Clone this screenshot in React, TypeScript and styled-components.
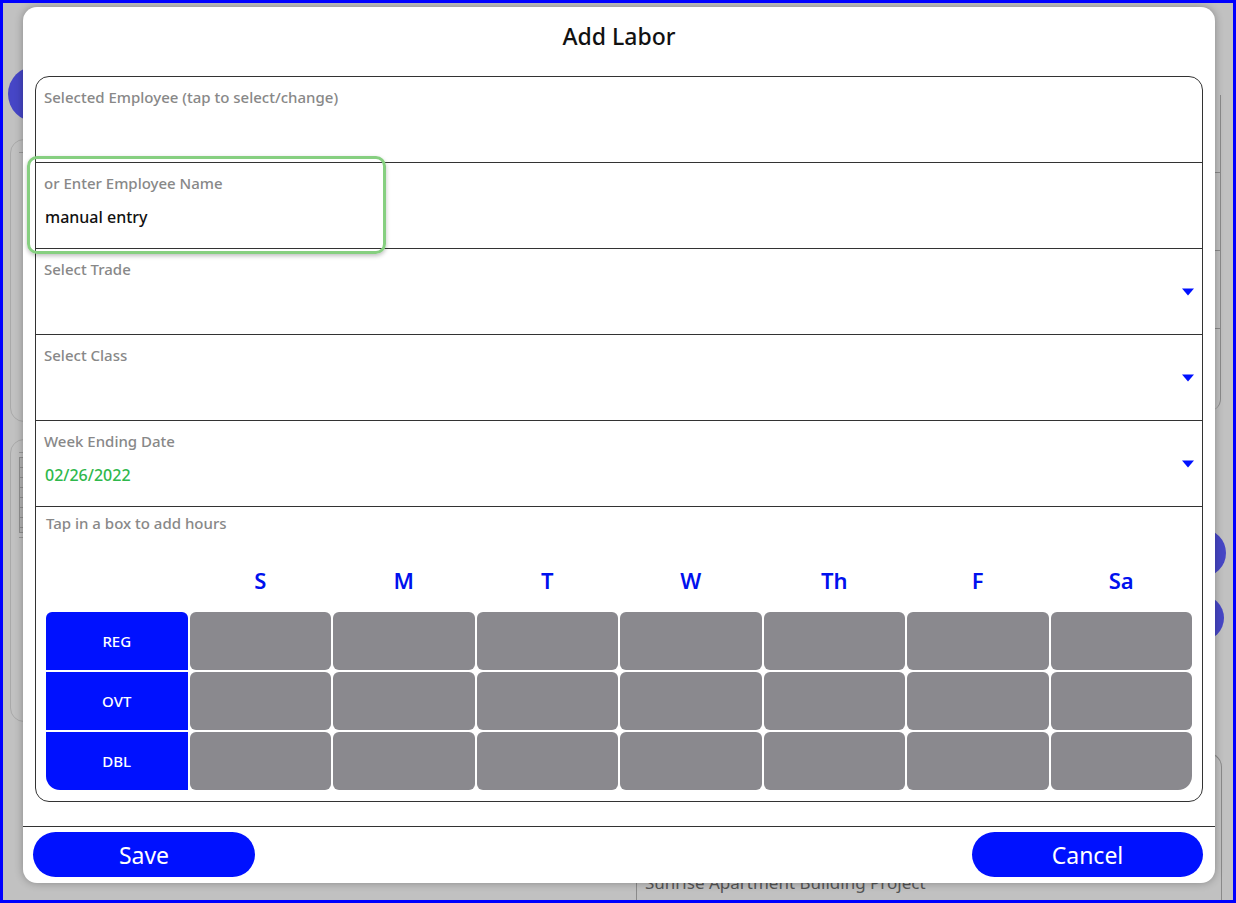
import React from 'react';
import styled, { createGlobalStyle } from 'styled-components';

const GlobalStyle = createGlobalStyle`
    html, body {
        margin: 0;
        padding: 0;
        background: #c1c1c1;
    }
    * {
        box-sizing: border-box;
    }
`;

const DAYS = ['S', 'M', 'T', 'W', 'Th', 'F', 'Sa'];
const PAY_TYPES = ['REG', 'OVT', 'DBL'];

const Frame = styled.div`
    position: relative;
    width: 1236px;
    height: 903px;
    border: 3px solid #0000ff;
    background: #c1c1c1;
    overflow: hidden;
    font-family: 'Noto Sans', 'Open Sans', sans-serif;
`;

/* dimmed page behind the dialog */
const BackdropPage = styled.div`
    display: flex;
    height: 100%;
`;

const LeftRail = styled.div`
    width: 40px;
    flex-shrink: 0;
    padding: 63px 0 0 5px;
    display: flex;
    flex-direction: column;
    gap: 17px;
`;

const BlueDot = styled.div<{ size: number }>`
    width: ${props => props.size}px;
    height: ${props => props.size}px;
    border-radius: 50%;
    background: #4646c6;
    flex-shrink: 0;
`;

const GhostCard = styled.div<{ height: number }>`
    height: ${props => props.height}px;
    margin-left: 2px;
    border: 1px solid #a9a9a9;
    border-radius: 14px;
    padding: 12px 0 0 8px;
    display: flex;
    flex-direction: column;
    gap: 4px;
`;

const GhostLine = styled.div<{ width: number }>`
    width: ${props => props.width}px;
    height: 1px;
    background: #9a9a9a;
`;

const GhostTable = styled.div`
    width: 30px;
    height: 76px;
    border: 1px solid #8f8f8f;
    background: repeating-linear-gradient(#b3b3b3 0 9px, #8f8f8f 9px 10px);
`;

const CenterArea = styled.div`
    flex: 1;
    display: flex;
    flex-direction: column;
    justify-content: flex-end;
    align-items: flex-end;
`;

const BottomCard = styled.div`
    width: 586px;
    height: 147px;
    margin-right: -4px;
    border: 1px solid #8a8a8a;
    border-bottom: none;
    border-radius: 0 14px 0 0;
    padding: 117px 0 0 8px;
    font-size: 17px;
    color: #555;
`;

const RightRail = styled.div`
    width: 15px;
    flex-shrink: 0;
    padding-top: 92px;
    display: flex;
    flex-direction: column;
`;

const GhostPanel = styled.div`
    width: 22px;
    margin-left: -19px;
    height: 316px;
    border-right: 1px solid #8a8a8a;
    border-radius: 0 0 12px 0;
    display: flex;
    flex-direction: column;
`;

const GhostPanelRow = styled.div`
    height: 78px;
    border-bottom: 1px solid #8a8a8a;
`;

const RightDots = styled.div`
    margin: 118px 0 0 -40px;
    display: flex;
    flex-direction: column;
    gap: 18px;
`;

/* dialog */
const Modal = styled.div`
    position: absolute;
    left: 20px;
    top: 4px;
    width: 1192px;
    height: 876px;
    background: #ffffff;
    border-radius: 14px;
    box-shadow: 0 0 8px rgba(0, 0, 0, 0.3);
    display: flex;
    flex-direction: column;
`;

const Title = styled.div`
    height: 58px;
    line-height: 58px;
    text-align: center;
    font-size: 23px;
    font-weight: 500;
    color: #111;
`;

const FormBox = styled.div`
    margin: 11px 12px 0 12px;
    height: 726px;
    border: 1px solid #333;
    border-radius: 14px;
    display: flex;
    flex-direction: column;
`;

const FieldRow = styled.div`
    position: relative;
    height: 86px;
    flex-shrink: 0;
    padding: 10px 8px 0 8px;
    border-bottom: 1px solid #333;
    display: flex;
    flex-direction: column;
`;

const FieldLabel = styled.div`
    font-size: 15px;
    line-height: 20px;
    font-weight: 500;
    color: #888;
`;

const FieldValue = styled.div<{ color: string }>`
    margin-top: 13px;
    margin-left: 1px;
    font-size: 16px;
    line-height: 22px;
    font-weight: 500;
    color: ${props => props.color};
`;

const DropArrow = styled.span`
    position: absolute;
    right: 8px;
    top: 50%;
    transform: translateY(-50%);
    width: 0;
    height: 0;
    border-left: 6px solid transparent;
    border-right: 6px solid transparent;
    border-top: 7px solid #0011ff;
`;

const FocusRing = styled.div`
    position: absolute;
    left: -9px;
    top: -7px;
    width: 359px;
    height: 98px;
    border: 3px solid #86cf80;
    border-radius: 10px;
    box-shadow: 0 2px 4px rgba(0, 0, 0, 0.25);
    pointer-events: none;
`;

const HoursSection = styled.div`
    flex: 1;
    padding: 6px 10px 10px 10px;
    display: flex;
    flex-direction: column;
`;

const HoursHint = styled.div`
    font-size: 15px;
    line-height: 20px;
    font-weight: 500;
    color: #888;
`;

const DayHeaderRow = styled.div`
    margin-top: 31px;
    height: 32px;
    display: grid;
    grid-template-columns: repeat(8, 1fr);
    column-gap: 2px;
`;

const DayHeader = styled.div`
    text-align: center;
    line-height: 32px;
    font-size: 22px;
    font-weight: 600;
    color: #0011ee;
`;

const HoursGrid = styled.div`
    margin-top: 16px;
    display: grid;
    grid-template-columns: repeat(8, 1fr);
    grid-template-rows: repeat(3, 58px);
    gap: 2px;
`;

const PayTypeCell = styled.div<{ radius: string }>`
    background: #0011ff;
    border-radius: ${props => props.radius};
    color: #fff;
    font-size: 15px;
    font-weight: 500;
    display: flex;
    align-items: center;
    justify-content: center;
`;

const HourCell = styled.button<{ radius: string }>`
    border: none;
    padding: 0;
    background: #8a898e;
    border-radius: ${props => props.radius};
    cursor: pointer;
`;

const Footer = styled.div`
    margin-top: 24px;
    border-top: 1px solid #333;
    padding: 5px 12px 0 10px;
    display: flex;
    justify-content: space-between;
`;

const PillButton = styled.button<{ width: number }>`
    width: ${props => props.width}px;
    height: 45px;
    border: none;
    border-radius: 23px;
    background: #0011ff;
    color: #fff;
    font-family: 'Noto Sans', 'Open Sans', sans-serif;
    font-size: 23px;
    font-weight: 400;
    cursor: pointer;
`;

const payRadius = (i: number) => {
    if (i === 0) return '6px 6px 0 0';
    if (i === PAY_TYPES.length - 1) return '0 0 0 14px';
    return '0';
};

const App: React.FC = () => {
    return (
        <>
            <GlobalStyle />
            <Frame>
                <BackdropPage>
                    <LeftRail>
                        <BlueDot size={56} />
                        <GhostCard height={283}>
                            <GhostLine width={10} />
                        </GhostCard>
                        <GhostCard height={283}>
                            <GhostLine width={12} />
                            <GhostTable />
                            <GhostLine width={20} />
                        </GhostCard>
                    </LeftRail>
                    <CenterArea>
                        <BottomCard>Sunrise Apartment Building Project</BottomCard>
                    </CenterArea>
                    <RightRail>
                        <GhostPanel>
                            <GhostPanelRow />
                            <GhostPanelRow />
                            <GhostPanelRow />
                        </GhostPanel>
                        <RightDots>
                            <BlueDot size={48} />
                            <BlueDot size={46} />
                        </RightDots>
                    </RightRail>
                </BackdropPage>

                <Modal>
                    <Title>Add Labor</Title>
                    <FormBox>
                        <FieldRow>
                            <FieldLabel>Selected Employee (tap to select/change)</FieldLabel>
                        </FieldRow>
                        <FieldRow>
                            <FieldLabel>or Enter Employee Name</FieldLabel>
                            <FieldValue color="#111">manual entry</FieldValue>
                            <FocusRing />
                        </FieldRow>
                        <FieldRow>
                            <FieldLabel>Select Trade</FieldLabel>
                            <DropArrow />
                        </FieldRow>
                        <FieldRow>
                            <FieldLabel>Select Class</FieldLabel>
                            <DropArrow />
                        </FieldRow>
                        <FieldRow>
                            <FieldLabel>Week Ending Date</FieldLabel>
                            <FieldValue color="#2fb84c">02/26/2022</FieldValue>
                            <DropArrow />
                        </FieldRow>
                        <HoursSection>
                            <HoursHint>Tap in a box to add hours</HoursHint>
                            <DayHeaderRow>
                                <div />
                                {DAYS.map(d => (
                                    <DayHeader key={d}>{d}</DayHeader>
                                ))}
                            </DayHeaderRow>
                            <HoursGrid>
                                {PAY_TYPES.map((p, row) => (
                                    <React.Fragment key={p}>
                                        <PayTypeCell radius={payRadius(row)}>{p}</PayTypeCell>
                                        {DAYS.map((d, col) => (
                                            <HourCell
                                                key={d}
                                                radius={
                                                    row === PAY_TYPES.length - 1 && col === DAYS.length - 1
                                                        ? '6px 6px 14px 6px'
                                                        : '6px'
                                                }
                                            />
                                        ))}
                                    </React.Fragment>
                                ))}
                            </HoursGrid>
                        </HoursSection>
                    </FormBox>
                    <Footer>
                        <PillButton width={222}>Save</PillButton>
                        <PillButton width={231}>Cancel</PillButton>
                    </Footer>
                </Modal>
            </Frame>
        </>
    );
};

export default App;
